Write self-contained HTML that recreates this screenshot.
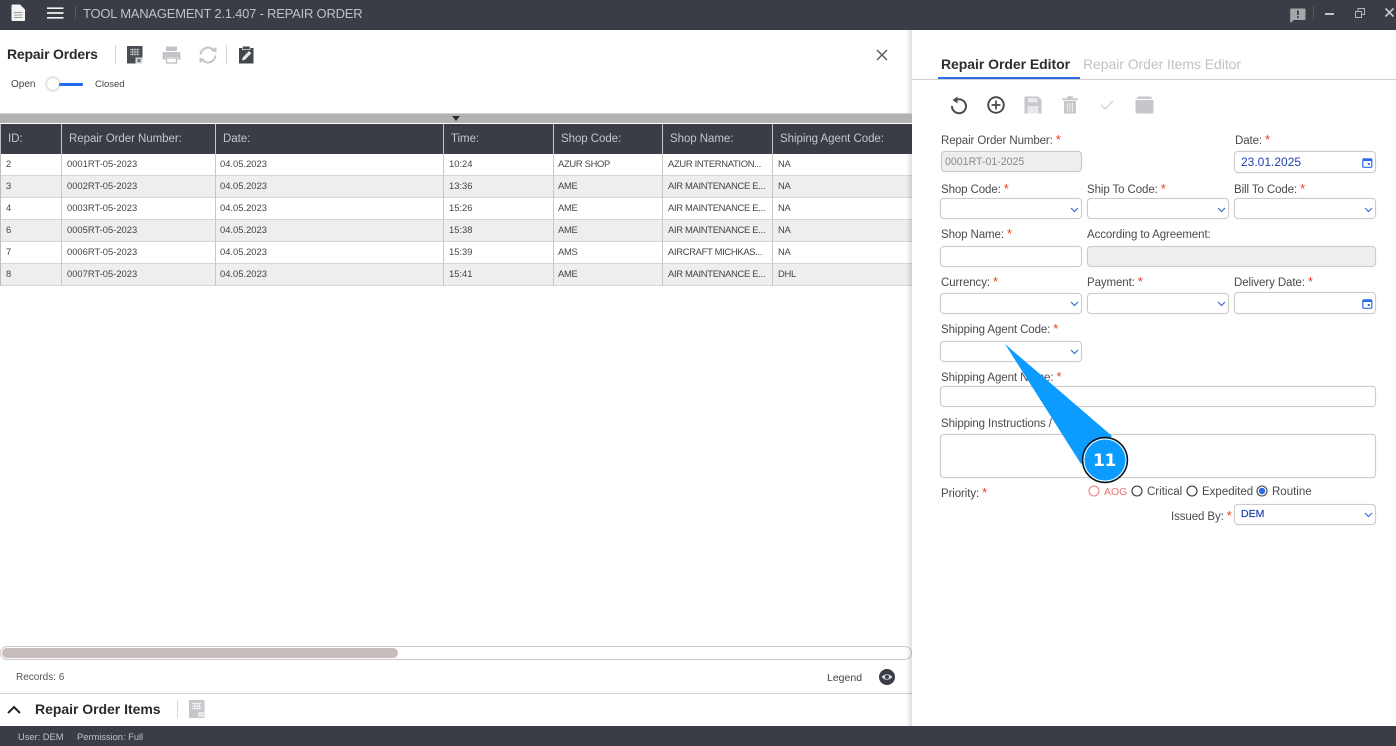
<!DOCTYPE html>
<html><head><meta charset="utf-8"><style>
html,body{margin:0;padding:0;width:1396px;height:746px;overflow:hidden;background:#fff;font-family:"Liberation Sans",sans-serif;}
#p{position:relative;width:1396px;height:746px;overflow:hidden;background:#fff}
.t{position:absolute;white-space:nowrap;line-height:14px;font-size:12px;color:#444}
.b{position:absolute;background:#3a3d45}
.h{position:absolute;white-space:nowrap;color:#c4c6cb;font-size:11.5px;line-height:14px;top:132px;letter-spacing:-.05px}
.c{position:absolute;white-space:nowrap;color:#444;font-size:9.4px;line-height:14px}
.n{letter-spacing:-.3px}
.l{position:absolute;white-space:nowrap;font-size:11.5px;line-height:14px;color:#4a4a4a;letter-spacing:-.1px}
.l i{font-style:normal;color:#f03a17;margin-left:3px;font-size:13px}
.r{letter-spacing:0;font-size:11.5px;top:485px}
.f{position:absolute;box-sizing:border-box;background:#fff;border:1px solid #cfcacb;border-radius:4px;box-shadow:0 0 1px #ddd;height:21px}
.g{background:#eeeeee}
svg{position:absolute;overflow:visible}
</style></head><body><div id="p">

<div class="b" style="left:0;top:0;width:1396px;height:30px"></div>
<svg style="left:11px;top:4px" width="15" height="18" viewBox="0 0 15 18"><path d="M0.500 1.500 Q0.500 0.500 1.500 0.500 L9 0.500 L14 5.500 L14 16 Q14 17 13 17 L1.500 17 Q0.500 17 0.500 16Z" fill="#f4f4f4"/><path d="M3 8.500H11.500M3 11H11.500M3 13.500H11.500" stroke="#9a9ca0" stroke-width="1"/></svg>
<svg style="left:47px;top:7px" width="17" height="12"><path d="M0 1.200H16.500M0 6H16.500M0 10.800H16.500" stroke="#f2f2f2" stroke-width="1.700"/></svg>
<div style="position:absolute;left:75px;top:6px;width:1px;height:13px;background:#585b62"></div>
<div class="t" style="left:83px;top:6px;font-size:13px;line-height:16px;color:#bfc1c5;letter-spacing:-.22px">TOOL MANAGEMENT 2.1.407 - REPAIR ORDER</div>

<svg style="left:1290px;top:8px" width="16" height="15" viewBox="0 0 16 15"><path d="M1 0.500H14.500Q15.500 0.500 15.500 1.500V11Q15.500 12 14.500 12H4L1 14.500Q0.200 14.800 0.200 14V1.500Q0.200 0.500 1 0.500Z" fill="#a5a6a9"/><rect x="7" y="2.500" width="1.800" height="4.500" fill="#3a3d45"/><rect x="7" y="8.300" width="1.800" height="1.800" fill="#3a3d45"/></svg>
<div style="position:absolute;left:1313px;top:6px;width:1px;height:13px;background:#585b62"></div>
<div style="position:absolute;left:1325px;top:13px;width:9px;height:2px;background:#c3c4c6"></div>
<svg style="left:1355px;top:8px" width="10" height="10"><path d="M0.500 3.500H6.500V9.500H0.500ZM3 3V0.500H9.500V6.500H7" fill="none" stroke="#b5b6b9" stroke-width="1"/></svg>
<svg style="left:1385px;top:8px" width="9" height="9"><path d="M0.500 0.500L8.500 8.500M8.500 0.500L0.500 8.500" stroke="#c9cacc" stroke-width="1.600"/></svg>

<div class="t" style="left:7px;top:46px;font-size:14px;line-height:16px;font-weight:bold;color:#2b2b2b;letter-spacing:-.2px">Repair Orders</div>
<div style="position:absolute;left:115px;top:45px;width:1px;height:19px;background:#d5d5d5"></div>
<div style="position:absolute;left:226px;top:45px;width:1px;height:19px;background:#d5d5d5"></div>

<svg style="left:127px;top:46px" width="16" height="18" viewBox="0 0 16 18"><rect width="15.500" height="17.500" fill="#4a4c54"/><path d="M3 3.500h9.500M3 6h9.500M3 8.500h9.500M5.500 2.500v7M8 2.500v7M10.500 2.500v7" stroke="#aeb0b5" stroke-width="1"/><rect x="8.500" y="11.500" width="7" height="6" fill="#d8d8da"/><path d="M10.500 13l3 3M13.500 13l-3 3" stroke="#4a4c54" stroke-width="1"/></svg>
<svg style="left:162px;top:46px" width="19" height="18" viewBox="0 0 19 18"><path d="M4 0.500H15V5H4Z" fill="#c3c4c8"/><path d="M1.500 6H17.500Q18.500 6 18.500 7.500V13.500H15.500V11H3.500V13.500H0.500V7.500Q0.500 6 1.500 6Z" fill="#c3c4c8"/><rect x="4.500" y="12" width="10" height="5" fill="none" stroke="#c3c4c8" stroke-width="1.400"/></svg>
<svg style="left:198px;top:46px" width="20" height="18" viewBox="0 0 20 18"><path d="M2.500 8.500A7.500 7.500 0 0 1 15.500 4" fill="none" stroke="#c5c6ca" stroke-width="2.200"/><path d="M17.500 9.500A7.500 7.500 0 0 1 4.500 14" fill="none" stroke="#c5c6ca" stroke-width="2.200"/><path d="M13 4.800L18.500 6.500V0.800Z" fill="#c5c6ca"/><path d="M7 13.200L1.500 11.500V17.200Z" fill="#c5c6ca"/></svg>
<svg style="left:238px;top:46px" width="16" height="18" viewBox="0 0 16 18"><path d="M1 2H15.500V17.500H1Z" fill="#45474f"/><rect x="4.500" y="0.200" width="7.500" height="3.500" fill="#45474f" stroke="#fff" stroke-width=".6"/><path d="M4 14.500L4.700 11.500L11 5L13.300 7.300L7 13.800Z" fill="#e8e8ea"/></svg>

<svg style="left:876px;top:49px" width="12" height="12"><path d="M1 1L11 11M11 1L1 11" stroke="#55575d" stroke-width="1.400"/></svg>

<div class="t" style="left:11px;top:78px;font-size:10px;line-height:13px">Open</div>
<div style="position:absolute;left:54px;top:83px;width:29px;height:2.500px;background:#1f6cf0;border-radius:1px"></div>
<div style="position:absolute;left:47px;top:78px;width:12px;height:12px;border-radius:50%;background:#fff;box-shadow:0 0 3px #999"></div>
<div class="t" style="left:95px;top:78px;font-size:9.500px;line-height:13px">Closed</div>

<div style="position:absolute;left:0;top:113px;width:912px;height:10px;background:#b3b3b3;border-top:1px solid #d0d0d0;box-sizing:border-box"></div>
<div style="position:absolute;left:452px;top:116px;width:0;height:0;border-left:4px solid transparent;border-right:4px solid transparent;border-top:5px solid #2c2c2c"></div>

<div class="b" style="left:0;top:124px;width:912px;height:30px"></div>

<div style="position:absolute;left:0;top:176px;width:912px;height:21px;background:#eeeeee"></div>
<div style="position:absolute;left:0;top:220px;width:912px;height:21px;background:#eeeeee"></div>
<div style="position:absolute;left:0;top:264px;width:912px;height:21px;background:#eeeeee"></div>

<div style="position:absolute;left:0;top:175px;width:912px;height:1px;background:#d6d6d6"></div>
<div style="position:absolute;left:0;top:197px;width:912px;height:1px;background:#d6d6d6"></div>
<div style="position:absolute;left:0;top:219px;width:912px;height:1px;background:#d6d6d6"></div>
<div style="position:absolute;left:0;top:241px;width:912px;height:1px;background:#d6d6d6"></div>
<div style="position:absolute;left:0;top:263px;width:912px;height:1px;background:#d6d6d6"></div>
<div style="position:absolute;left:0;top:285px;width:912px;height:1px;background:#d6d6d6"></div>

<div style="position:absolute;left:0;top:124px;width:1px;height:162px;background:#bdbdbd"></div>
<div style="position:absolute;left:61px;top:124px;width:1px;height:162px;background:#c8c8c8"></div>
<div style="position:absolute;left:215px;top:124px;width:1px;height:162px;background:#c8c8c8"></div>
<div style="position:absolute;left:443px;top:124px;width:1px;height:162px;background:#c8c8c8"></div>
<div style="position:absolute;left:553px;top:124px;width:1px;height:162px;background:#c8c8c8"></div>
<div style="position:absolute;left:662px;top:124px;width:1px;height:162px;background:#c8c8c8"></div>
<div style="position:absolute;left:772px;top:124px;width:1px;height:162px;background:#c8c8c8"></div>

<div class="h" style="left:8px">ID:</div>
<div class="h" style="left:69px">Repair Order Number:</div>
<div class="h" style="left:223px">Date:</div>
<div class="h" style="left:451px">Time:</div>
<div class="h" style="left:561px">Shop Code:</div>
<div class="h" style="left:670px">Shop Name:</div>
<div class="h" style="left:780px">Shiping Agent Code:</div>

<div class="c" style="left:6px;top:157px">2</div><div class="c" style="left:67px;top:157px">0001RT-05-2023</div><div class="c" style="left:220px;top:157px">04.05.2023</div><div class="c" style="left:449px;top:157px">10:24</div><div class="c n" style="left:558px;top:157px">AZUR SHOP</div><div class="c n" style="left:668px;top:157px">AZUR INTERNATION...</div><div class="c n" style="left:778px;top:157px">NA</div>
<div class="c" style="left:6px;top:179px">3</div><div class="c" style="left:67px;top:179px">0002RT-05-2023</div><div class="c" style="left:220px;top:179px">04.05.2023</div><div class="c" style="left:449px;top:179px">13:36</div><div class="c n" style="left:558px;top:179px">AME</div><div class="c n" style="left:668px;top:179px">AIR MAINTENANCE E...</div><div class="c n" style="left:778px;top:179px">NA</div>
<div class="c" style="left:6px;top:201px">4</div><div class="c" style="left:67px;top:201px">0003RT-05-2023</div><div class="c" style="left:220px;top:201px">04.05.2023</div><div class="c" style="left:449px;top:201px">15:26</div><div class="c n" style="left:558px;top:201px">AME</div><div class="c n" style="left:668px;top:201px">AIR MAINTENANCE E...</div><div class="c n" style="left:778px;top:201px">NA</div>
<div class="c" style="left:6px;top:223px">6</div><div class="c" style="left:67px;top:223px">0005RT-05-2023</div><div class="c" style="left:220px;top:223px">04.05.2023</div><div class="c" style="left:449px;top:223px">15:38</div><div class="c n" style="left:558px;top:223px">AME</div><div class="c n" style="left:668px;top:223px">AIR MAINTENANCE E...</div><div class="c n" style="left:778px;top:223px">NA</div>
<div class="c" style="left:6px;top:245px">7</div><div class="c" style="left:67px;top:245px">0006RT-05-2023</div><div class="c" style="left:220px;top:245px">04.05.2023</div><div class="c" style="left:449px;top:245px">15:39</div><div class="c n" style="left:558px;top:245px">AMS</div><div class="c n" style="left:668px;top:245px">AIRCRAFT MICHKAS...</div><div class="c n" style="left:778px;top:245px">NA</div>
<div class="c" style="left:6px;top:267px">8</div><div class="c" style="left:67px;top:267px">0007RT-05-2023</div><div class="c" style="left:220px;top:267px">04.05.2023</div><div class="c" style="left:449px;top:267px">15:41</div><div class="c n" style="left:558px;top:267px">AME</div><div class="c n" style="left:668px;top:267px">AIR MAINTENANCE E...</div><div class="c n" style="left:778px;top:267px">DHL</div>

<div style="position:absolute;left:0;top:646px;width:912px;height:14px;box-sizing:border-box;border:1px solid #cfcaca;border-radius:7px"></div>
<div style="position:absolute;left:2px;top:648px;width:396px;height:10px;background:#c6bcbc;border-radius:5px"></div>

<div class="t" style="left:16px;top:671px;font-size:10px;color:#555">Records: 6</div>
<div class="t" style="left:827px;top:671px;font-size:10.500px;color:#444">Legend</div>
<svg style="left:879px;top:669px" width="16" height="16" viewBox="0 0 16 16"><circle cx="8" cy="8" r="8" fill="#3a3d45"/><path d="M2.500 8Q8 2.500 13.500 8Q8 13.500 2.500 8Z" fill="#dcdcde"/><circle cx="8" cy="8" r="2" fill="#3a3d45"/></svg>

<div style="position:absolute;left:0;top:693px;width:912px;height:1px;background:#d6d0d0"></div>
<svg style="left:7px;top:705px" width="14" height="9"><path d="M1 8L7 2L13 8" fill="none" stroke="#222" stroke-width="2"/></svg>
<div class="t" style="left:35px;top:701px;font-size:14px;line-height:16px;font-weight:bold;color:#2b2b2b;letter-spacing:-.03px">Repair Order Items</div>
<div style="position:absolute;left:177px;top:700px;width:1px;height:18px;background:#d8d8d8"></div>
<svg style="left:189px;top:700px" width="16" height="18" viewBox="0 0 16 18"><rect width="15.500" height="18" fill="#c6c7cb"/><path d="M3 3.500h9.500M3 6h9.500M3 8.500h9.500M5.500 2.500v7M8 2.500v7M10.500 2.500v7" stroke="#eeeeef" stroke-width="1"/><rect x="9" y="12" width="6" height="5" fill="#e6e6e8"/></svg>

<div class="b" style="left:0;top:726px;width:1396px;height:20px"></div>
<div class="t" style="left:18px;top:730px;font-size:9.300px;color:#c0c2c6">User: DEM</div>
<div class="t" style="left:77px;top:730px;font-size:9.300px;color:#c0c2c6">Permission: Full</div>

<div style="position:absolute;left:906px;top:154px;width:6px;height:572px;background:linear-gradient(90deg,rgba(0,0,0,0),rgba(0,0,0,.13))"></div>
<div style="position:absolute;left:906px;top:30px;width:6px;height:83px;background:linear-gradient(90deg,rgba(0,0,0,0),rgba(0,0,0,.13))"></div>
<div style="position:absolute;left:912px;top:30px;width:484px;height:696px;background:#fff"></div>

<div class="t" style="left:941px;top:56px;font-size:14px;line-height:16px;font-weight:bold;color:#2e2e2e;letter-spacing:-.05px">Repair Order Editor</div>
<div class="t" style="left:1083px;top:56px;font-size:14px;line-height:16px;color:#c2c2c4;letter-spacing:-.06px">Repair Order Items Editor</div>
<div style="position:absolute;left:912px;top:79px;width:484px;height:1px;background:#cfcfcf"></div>
<div style="position:absolute;left:938px;top:77px;width:142px;height:2px;background:#2b6de8"></div>

<svg style="left:950px;top:96px" width="18" height="19" viewBox="0 0 18 19"><path d="M5 4.500A7 7 0 1 1 2 10" fill="none" stroke="#4a4c52" stroke-width="2"/><path d="M7.500 0.500V7.500L2.500 4Z" fill="#4a4c52"/></svg>
<svg style="left:987px;top:96px" width="18" height="18"><circle cx="9" cy="9" r="7.800" fill="none" stroke="#45474d" stroke-width="1.900"/><path d="M9 4.500V13.500M4.500 9H13.500" stroke="#45474d" stroke-width="1.700"/></svg>
<svg style="left:1024px;top:96px" width="18" height="18" viewBox="0 0 18 18"><path d="M1 0.500H14L17.500 4V17.500H0.500V1Z" fill="#c6c7cb"/><rect x="4" y="2" width="9.500" height="4.500" fill="#e9e9eb"/><rect x="3.500" y="10" width="11" height="7.500" fill="#e9e9eb"/></svg>
<svg style="left:1062px;top:96px" width="16" height="18" viewBox="0 0 16 18"><path d="M0.500 2.500H15.500V4H0.500ZM5.500 2.500V0.500H10.500V2.500" fill="#c6c7cb" stroke="#c6c7cb" stroke-width=".6"/><path d="M2 5H14V17.500H2Z" fill="#c6c7cb"/><path d="M5.500 7V15.500M8 7V15.500M10.500 7V15.500" stroke="#eeeeef" stroke-width="1"/></svg>
<svg style="left:1100px;top:100px" width="14" height="10"><path d="M1 5L5 9L13 1" fill="none" stroke="#d0d1d4" stroke-width="1.300"/></svg>
<svg style="left:1135px;top:96px" width="19" height="18" viewBox="0 0 19 18"><path d="M4 0.500H15Q17 0.500 17 3H1.500Q2 1 4 0.500Z" fill="#c6c7cb"/><path d="M1 4H17.500Q18.500 4 18.500 5V16.500Q18.500 17.500 17.500 17.500H1.500Q0.500 17.500 0.500 16.500V5Q0.500 4 1 4Z" fill="#c6c7cb"/></svg>

<div class="l" style="left:941px;top:133px">Repair Order Number:<i>*</i></div>
<div class="f g" style="left:941px;top:151px;width:141px;border-color:#c9c6c6"></div>
<div class="t" style="left:945px;top:156px;font-size:10.600px;line-height:13px;color:#8a8a8a">0001RT-01-2025</div>
<div class="l" style="left:1235px;top:133px">Date:<i>*</i></div>
<div class="f" style="left:1234px;top:151px;width:142px;height:22px"></div>
<div class="t" style="left:1241px;top:156px;font-size:12px;line-height:13px;color:#2241b0">23.01.2025</div>
<svg style="left:1362px;top:157px" width="11" height="11" viewBox="0 0 11 11"><rect x=".8" y="1.800" width="9" height="8.500" rx="1" fill="none" stroke="#2b6de8" stroke-width="1.200"/><rect x=".8" y="1.800" width="9" height="2.200" fill="#2b6de8"/><rect x="5.800" y="6" width="2" height="2" fill="#2b6de8"/></svg>

<div class="l" style="left:941px;top:182px">Shop Code:<i>*</i></div>
<div class="l" style="left:1087px;top:182px">Ship To Code:<i>*</i></div>
<div class="l" style="left:1234px;top:182px">Bill To Code:<i>*</i></div>
<div class="f" style="left:940px;top:198px;width:142px"></div>
<div class="f" style="left:1087px;top:198px;width:142px"></div>
<div class="f" style="left:1234px;top:198px;width:142px"></div>
<svg style="left:1070px;top:207px" width="9" height="6"><path d="M1 1L4.500 4.500L8 1" fill="none" stroke="#3f6fd8" stroke-width="1.200"/></svg>
<svg style="left:1217px;top:207px" width="9" height="6"><path d="M1 1L4.500 4.500L8 1" fill="none" stroke="#3f6fd8" stroke-width="1.200"/></svg>
<svg style="left:1364px;top:207px" width="9" height="6"><path d="M1 1L4.500 4.500L8 1" fill="none" stroke="#3f6fd8" stroke-width="1.200"/></svg>

<div class="l" style="left:941px;top:227px">Shop Name:<i>*</i></div>
<div class="l" style="left:1087px;top:228px">According to Agreement:</div>
<div class="f" style="left:940px;top:246px;width:142px"></div>
<div class="f g" style="left:1087px;top:246px;width:289px"></div>

<div class="l" style="left:941px;top:275px">Currency:<i>*</i></div>
<div class="l" style="left:1087px;top:275px">Payment:<i>*</i></div>
<div class="l" style="left:1234px;top:275px">Delivery Date:<i>*</i></div>
<div class="f" style="left:940px;top:293px;width:142px"></div>
<div class="f" style="left:1087px;top:293px;width:142px"></div>
<div class="f" style="left:1234px;top:292px;width:142px;height:22px"></div>
<svg style="left:1070px;top:301px" width="9" height="6"><path d="M1 1L4.500 4.500L8 1" fill="none" stroke="#3f6fd8" stroke-width="1.200"/></svg>
<svg style="left:1217px;top:301px" width="9" height="6"><path d="M1 1L4.500 4.500L8 1" fill="none" stroke="#3f6fd8" stroke-width="1.200"/></svg>
<svg style="left:1362px;top:298px" width="11" height="11" viewBox="0 0 11 11"><rect x=".8" y="1.800" width="9" height="8.500" rx="1" fill="none" stroke="#2b6de8" stroke-width="1.200"/><rect x=".8" y="1.800" width="9" height="2.200" fill="#2b6de8"/><rect x="5.800" y="6" width="2" height="2" fill="#2b6de8"/></svg>

<div class="l" style="left:941px;top:322px">Shipping Agent Code:<i>*</i></div>
<div class="f" style="left:940px;top:341px;width:142px"></div>
<svg style="left:1070px;top:349px" width="9" height="6"><path d="M1 1L4.500 4.500L8 1" fill="none" stroke="#3f6fd8" stroke-width="1.200"/></svg>

<div class="l" style="left:941px;top:370px">Shipping Agent Name:<i>*</i></div>
<div class="f" style="left:940px;top:386px;width:436px"></div>

<div class="l" style="left:941px;top:417px">Shipping Instructions /</div>
<div class="f" style="left:940px;top:434px;width:436px;height:44px"></div>

<div class="l" style="left:941px;top:486px">Priority:<i>*</i></div>

<svg style="left:1088px;top:485px" width="12" height="12"><circle cx="6" cy="6" r="5" fill="none" stroke="#f08080" stroke-width="1.100"/></svg>
<div class="l r" style="left:1104px;font-size:10.500px;color:#f07070">AOG</div>
<svg style="left:1131px;top:485px" width="12" height="12"><circle cx="6" cy="6" r="5" fill="none" stroke="#333" stroke-width="1.100"/></svg>
<div class="l r" style="left:1147px">Critical</div>
<svg style="left:1186px;top:485px" width="12" height="12"><circle cx="6" cy="6" r="5" fill="none" stroke="#333" stroke-width="1.100"/></svg>
<div class="l r" style="left:1202px">Expedited</div>
<svg style="left:1256px;top:485px" width="12" height="12"><circle cx="6" cy="6" r="5" fill="none" stroke="#444" stroke-width="1.100"/><circle cx="6" cy="6" r="3.200" fill="#2b6de8"/></svg>
<div class="l r" style="left:1272px">Routine</div>

<div class="l" style="left:1171px;top:509px">Issued By:<i>*</i></div>
<div class="f" style="left:1234px;top:504px;width:142px"></div>
<div class="t" style="left:1241px;top:508px;font-size:10.500px;line-height:13px;color:#2241b0;-webkit-text-stroke:.2px #2241b0">DEM</div>
<svg style="left:1364px;top:512px" width="9" height="6"><path d="M1 1L4.500 4.500L8 1" fill="none" stroke="#3f6fd8" stroke-width="1.200"/></svg>

<svg style="left:0;top:0" width="1396" height="746"><path d="M1005 344L1112 436L1081 464Z" fill="#0c9bff"/><circle cx="1105" cy="460" r="22.500" fill="#0c9bff" stroke="#111" stroke-width="1.400"/><circle cx="1105" cy="460" r="21" fill="none" stroke="#fff" stroke-width="1"/></svg>
<div class="t" style="left:1093px;top:452px;font-size:17px;line-height:19px;font-weight:bold;color:#fff;font-family:'DejaVu Sans',sans-serif;letter-spacing:-.3px">11</div>

</div></body></html>
